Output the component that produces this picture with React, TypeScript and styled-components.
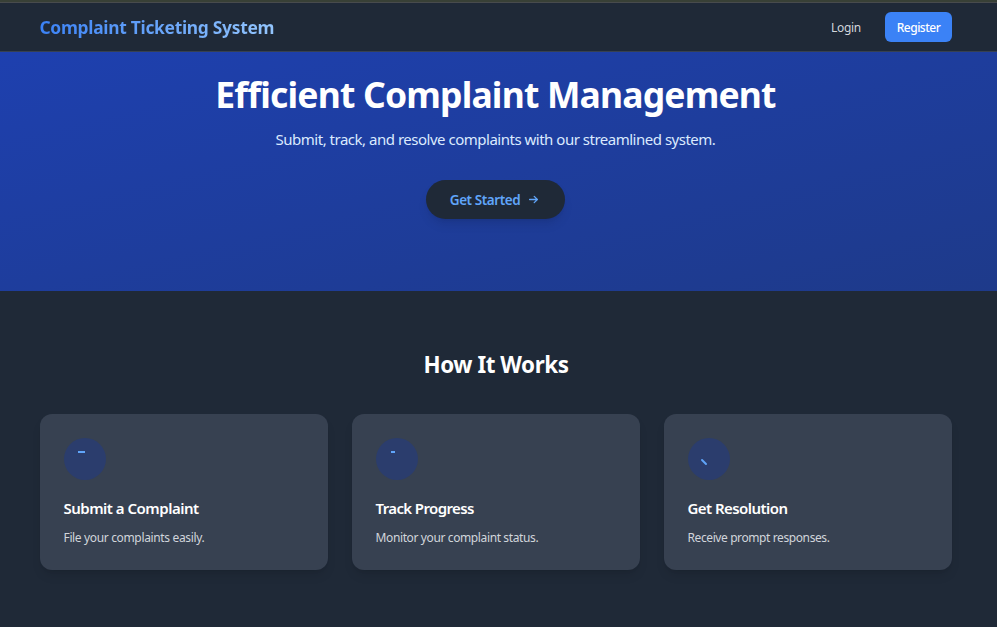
import React from "react";
import styled, { createGlobalStyle } from "styled-components";

const GlobalStyle = createGlobalStyle`
  *, *::before, *::after { box-sizing: border-box; }
  body {
    margin: 0;
    overflow: hidden;
    background: #1f2937;
    color: #fff;
    font-family: "Noto Sans", "Open Sans", sans-serif;
  }
  h1, h2, h3, p { margin: 0; white-space: nowrap; }
`;

const Page = styled.div`
  display: flex;
  flex-direction: column;
  height: 627px;
  overflow: hidden;
`;

const TopStrip = styled.div`
  height: 3px;
  background: #384036;
  border-bottom: 1px solid #484b4d;
`;

const Header = styled.header`
  display: flex;
  align-items: center;
  justify-content: space-between;
  height: 49px;
  padding: 0 45px 0 39.5px;
  border-bottom: 1px solid #374151;
`;

const Logo = styled.div`
  font-size: 17.4px;
  font-weight: 700;
  line-height: 24px;
  letter-spacing: -0.29px;
  white-space: nowrap;
  color: transparent;
  background: linear-gradient(to right, #3b82f6, #93c5fd);
  background-clip: text;
  -webkit-background-clip: text;
`;

const Nav = styled.nav`
  display: flex;
  align-items: center;
  gap: 24px;
`;

const LoginLink = styled.a`
  padding-top: 1px;
  font-size: 12px;
  line-height: 18px;
  letter-spacing: -0.3px;
  color: #d1d5db;
`;

const RegisterButton = styled.a`
  display: flex;
  align-items: center;
  justify-content: center;
  width: 67px;
  height: 30px;
  padding-top: 1px;
  border-radius: 6px;
  background: #3b82f6;
  font-size: 12px;
  font-weight: 500;
  letter-spacing: -0.5px;
`;

const Hero = styled.section`
  display: flex;
  flex-direction: column;
  align-items: center;
  height: 239px;
  padding: 20px 6px 0 0;
  background: linear-gradient(to bottom right, #1e40af, #1e3a8a);
`;

const HeroTitle = styled.h1`
  font-size: 35.5px;
  font-weight: 700;
  line-height: 45px;
  letter-spacing: -0.82px;
`;

const HeroText = styled.p`
  margin-top: 10px;
  font-size: 15px;
  line-height: 24px;
  letter-spacing: -0.49px;
  color: #dbeafe;
`;

const StartButton = styled.a`
  display: flex;
  align-items: center;
  justify-content: center;
  gap: 6px;
  width: 139px;
  height: 39px;
  margin-top: 29px;
  border-radius: 20px;
  background: #1f2937;
  box-shadow: 0 7px 11px -2px rgba(0, 0, 0, 0.1), 0 3px 4.5px -3px rgba(0, 0, 0, 0.1);
  color: #60a5fa;
  font-size: 13.5px;
  font-weight: 600;
  letter-spacing: -0.43px;
  white-space: nowrap;
`;

const Steps = styled.section`
  flex: 1;
  padding: 58px 45px 0 40px;
`;

const StepsTitle = styled.h2`
  font-size: 22.4px;
  font-weight: 700;
  line-height: 32px;
  letter-spacing: -0.45px;
  text-align: center;
`;

const CardGrid = styled.div`
  display: grid;
  grid-template-columns: repeat(3, 1fr);
  gap: 24px;
  margin-top: 33px;
`;

const Card = styled.article`
  height: 156px;
  padding: 24px;
  border-radius: 12px;
  background: #374151;
  box-shadow: 0 7px 11px -2px rgba(0, 0, 0, 0.1), 0 3px 4.5px -3px rgba(0, 0, 0, 0.1);
`;

const IconCircle = styled.div`
  display: grid;
  place-items: center;
  width: 42px;
  height: 42px;
  border-radius: 50%;
  background: #2b3d6d;
`;

const CardTitle = styled.h3<{ $tracking: number }>`
  margin: 18px 0 0 -0.5px;
  font-size: 15px;
  font-weight: 600;
  line-height: 21px;
  letter-spacing: ${(p) => p.$tracking}px;
`;

const CardText = styled.p<{ $tracking: number }>`
  margin: 10px 0 0 -0.5px;
  font-size: 12px;
  line-height: 18px;
  letter-spacing: ${(p) => p.$tracking}px;
  color: #d1d5db;
`;

const ArrowIcon = () => (
  <svg
    width="15"
    height="15"
    viewBox="0 0 15 15"
    fill="none"
    stroke="currentColor"
    strokeWidth="1.3"
    strokeLinecap="round"
    strokeLinejoin="round"
  >
    <path d="M3.6 7.5H11.4M8.2 4.4L11.4 7.5L8.2 10.6" />
  </svg>
);

const StepIcon = ({ path, round }: { path: string; round?: boolean }) => (
  <svg
    width="18"
    height="18"
    viewBox="0 0 18 18"
    fill="none"
    stroke="#60a5fa"
    strokeWidth={round ? 1.9 : 2}
    strokeLinecap={round ? "round" : "butt"}
  >
    <path d={path} />
  </svg>
);

const steps = [
  { title: "Submit a Complaint", text: "File your complaints easily.", path: "M2 2H9", titleTracking: -0.5, textTracking: -0.35 },
  { title: "Track Progress", text: "Monitor your complaint status.", path: "M3 2H7", titleTracking: -0.62, textTracking: -0.38 },
  { title: "Get Resolution", text: "Receive prompt responses.", path: "M2 10L6 14", round: true, titleTracking: -0.55, textTracking: -0.4 },
];

export default function App() {
  return (
    <>
      <GlobalStyle />
      <Page>
        <TopStrip />
        <Header>
          <Logo>Complaint Ticketing System</Logo>
          <Nav>
            <LoginLink>Login</LoginLink>
            <RegisterButton>Register</RegisterButton>
          </Nav>
        </Header>
        <Hero>
          <HeroTitle>Efficient Complaint Management</HeroTitle>
          <HeroText>Submit, track, and resolve complaints with our streamlined system.</HeroText>
          <StartButton>
            Get Started
            <ArrowIcon />
          </StartButton>
        </Hero>
        <Steps>
          <StepsTitle>How It Works</StepsTitle>
          <CardGrid>
            {steps.map((step) => (
              <Card key={step.title}>
                <IconCircle>
                  <StepIcon path={step.path} round={step.round} />
                </IconCircle>
                <CardTitle $tracking={step.titleTracking}>{step.title}</CardTitle>
                <CardText $tracking={step.textTracking}>{step.text}</CardText>
              </Card>
            ))}
          </CardGrid>
        </Steps>
      </Page>
    </>
  );
}
